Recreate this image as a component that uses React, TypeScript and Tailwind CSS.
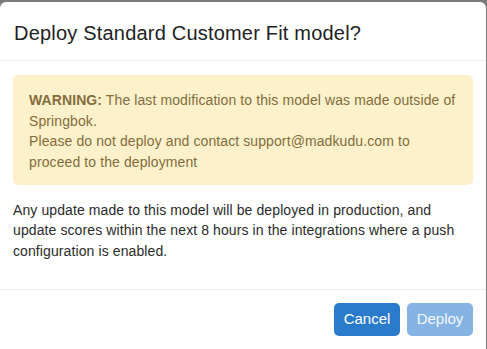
export default function App() {
  return (
    <div className="h-[349px] w-[487px] bg-[#7a7a7a] pt-[2px] pr-[1px] overflow-hidden font-['Liberation_Sans',Arial,sans-serif]">
      <div className="h-[400px] rounded-t-[6px] bg-white text-[#212529]">
        <div className="h-[59px] border-b border-[#e9ecef] px-[14px] flex items-center">
          <h1 className="text-[20px] leading-[30px] tracking-[0.2px] text-[#222] pt-[3px]">
            Deploy Standard Customer Fit model?
          </h1>
        </div>
        <div className="px-[13px] pt-[14px]">
          <div className="rounded-[5px] bg-[#fdf1cc] text-[#846d3a] px-[16px] pt-[15px] pb-[13px] text-[14px] leading-[20.5px] tracking-[0.1px]">
            <p>
              <strong className="font-bold">WARNING:</strong> The last modification to this model was made
              outside of Springbok.
            </p>
            <p>Please do not deploy and contact support@madkudu.com to proceed to the deployment</p>
          </div>
          <p className="mt-[15px] text-[14px] leading-[20.3px] tracking-[0.1px] text-[#2b2b2b]">
            Any update made to this model will be deployed in production, and update scores within the next 8
            hours in the integrations where a push configuration is enabled.
          </p>
        </div>
        <div className="mt-[28px] border-t border-[#e9ecef] flex justify-end gap-[7px] pt-[13px] pr-[13px]">
          <button className="h-[33px] w-[66px] rounded-[5px] bg-[#2b7bcc] text-white text-[15px]">Cancel</button>
          <button className="h-[33px] w-[66px] rounded-[5px] bg-[#85b3e4] text-white/90 text-[15px]">Deploy</button>
        </div>
      </div>
    </div>
  );
}
